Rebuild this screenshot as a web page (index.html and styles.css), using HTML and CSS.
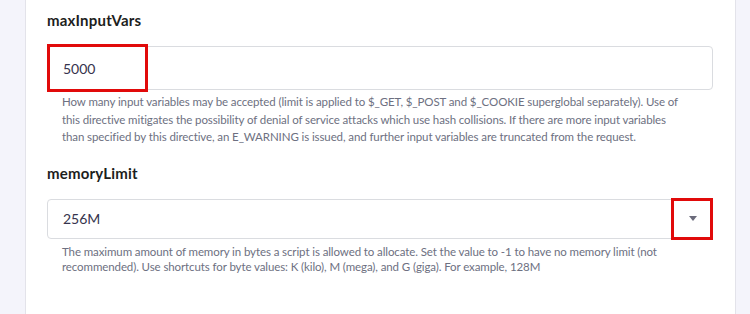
FILE: index.html
```html
<!DOCTYPE html>
<html lang="en">
<head>
  <meta charset="UTF-8" />
  <title>PHP options</title>
  <link rel="stylesheet" href="styles.css">
</head>
<body>
  <div class="page">
    <div class="side"></div>

    <div class="card">
      <!-- maxInputVars -->
      <div class="field">
        <label class="field-label">maxInputVars</label>
        <div class="control">
          <input class="input" type="text" value="5000">
          <span class="mark mark-value"></span>
        </div>
        <p class="help">How many input variables may be accepted (limit is applied to $_GET, $_POST and $_COOKIE superglobal separately). Use of<br>
          this directive mitigates the possibility of denial of service attacks which use hash collisions. If there are more input variables<br>
          than specified by this directive, an E_WARNING is issued, and further input variables are truncated from the request.</p>
      </div>

      <!-- memoryLimit -->
      <div class="field">
        <label class="field-label">memoryLimit</label>
        <div class="control">
          <div class="select">
            <span>256M</span>
            <span class="caret"></span>
          </div>
          <span class="mark mark-caret"></span>
        </div>
        <p class="help help-tight">The maximum amount of memory in bytes a script is allowed to allocate. Set the value to -1 to have no memory limit (not recommended). Use shortcuts for byte values: K (kilo), M (mega), and G (giga). For example, 128M</p>
      </div>
    </div>

    <div class="side side-right"></div>
  </div>
</body>
</html>
```

FILE: styles.css
```css
:root {
  --bg: #f4f4fb;
  --line: #e3e3ea;
  --field-border: #dadce0;
  --text: #1d1e20;
  --muted: #6d7081;
  --mark: #e10a0a;
}

body {
  margin: 0;
  background: var(--bg);
  font-family: "Lato", "DejaVu Sans", sans-serif;
  color: var(--text);
}

.page {
  display: flex;
  height: 314px;
  overflow: hidden;
}

.side {
  width: 25px;
  flex-shrink: 0;
  background: var(--bg);
  border-right: 1px solid var(--line);
}

.side-right {
  flex-grow: 1;
  border-right: none;
  border-left: 1px solid var(--line);
}

.card {
  width: 666px;
  flex-shrink: 0;
  background: #fff;
  padding: 10px 22px 0 21px;
}

.field {
  margin-bottom: 17px;
}

.field-label {
  display: block;
  font-size: 15px;
  font-weight: 700;
  line-height: 20px;
  margin-bottom: 16px;
  letter-spacing: 0.2px;
}

.control {
  position: relative;
}

.input {
  display: block;
  box-sizing: border-box;
  width: 100%;
  height: 44px;
  margin: 0;
  padding: 0 15px;
  border: 1px solid var(--field-border);
  border-radius: 4px;
  font-family: inherit;
  font-size: 14px;
  color: #36344d;
  outline: none;
}

.select {
  box-sizing: border-box;
  height: 40px;
  padding: 0 15px;
  border: 1px solid var(--field-border);
  border-radius: 4px;
  display: flex;
  align-items: center;
  justify-content: space-between;
  font-size: 14px;
  color: #36344d;
}

.caret {
  width: 0;
  height: 0;
  border-left: 4px solid transparent;
  border-right: 4px solid transparent;
  border-top: 5px solid #6b6b7b;
}

.help {
  margin: 3px 0 0;
  padding: 0 5px 0 15px;
  font-size: 11.5px;
  letter-spacing: -0.1px;
  line-height: 17.5px;
  color: var(--muted);
}

.help-tight {
  margin-top: 5px;
  line-height: 15px;
}

/* red annotation frames */
.mark {
  position: absolute;
  box-sizing: border-box;
  border: 3px solid var(--mark);
  pointer-events: none;
}

.mark-value {
  top: -2px;
  left: 0;
  width: 101px;
  height: 48px;
}

.mark-caret {
  top: -1px;
  right: 0;
  width: 42px;
  height: 42px;
}
```
